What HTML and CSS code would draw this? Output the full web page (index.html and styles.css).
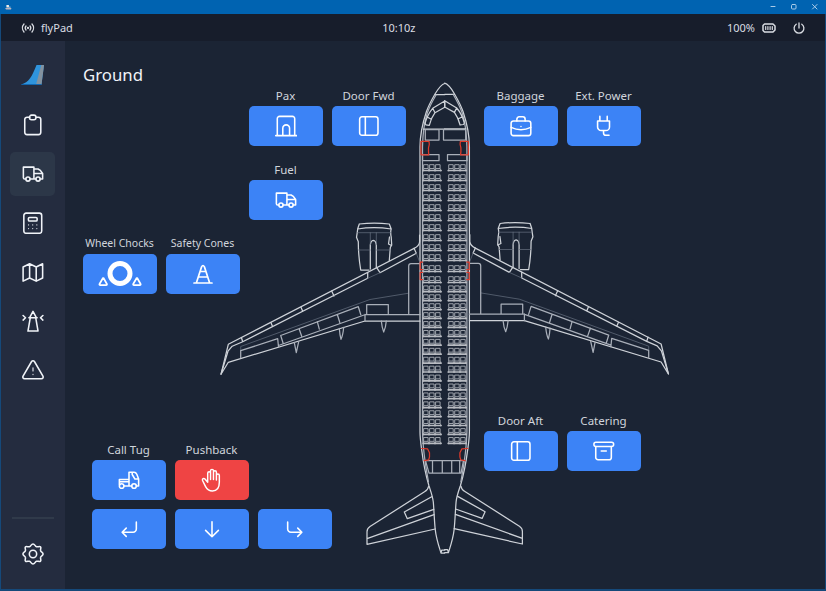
FILE: index.html
```html
<!DOCTYPE html>
<html lang="en">
<head>
<meta charset="utf-8">
<title>flyPad</title>
<link rel="stylesheet" href="styles.css">
</head>
<body>
<svg class="defs" aria-hidden="true">
  <symbol id="truck" viewBox="0 0 24 24"><circle cx="6.5" cy="17.5" r="2.3"/><circle cx="17.5" cy="17.5" r="2.3"/><path d="M4.2 17.5H3a1.5 1.5 0 0 1-1.5-1.500V4.500H13v13H8.800M13 17.500h2.200M19.800 17.500h2.700V11.500H13M13 6.500h4.500l2.500 1.500 2.500 3.500"/></symbol>
  <symbol id="door" viewBox="0 0 24 24"><rect x="1.800" y="2" width="20" height="20" rx="2.500"/><path d="M8 2v20"/></symbol>
</svg>
<div class="window">
  <div class="titlebar">
    <svg class="appicon" viewBox="0 0 8 6"><path d="M1.500 0h3v2h2v1h-5z" fill="#f2ece8"/><path d="M0 3.500h7.500L7 5.500H1z" fill="#b9b3bd"/></svg>
    <svg class="controls" viewBox="0 0 50 8"><path d="M1 3.500h4"/><rect x="21.500" y="1.500" width="4.500" height="4.500" rx="1"/><path d="m42.500 1.500 4.500 4.500m0-4.500-4.500 4.500"/></svg>
  </div>
  <header class="status">
    <div class="status-group">
      <svg class="signal" viewBox="0 0 14 10"><path d="M3 1a6 6 0 0 0 0 8M11 1a6 6 0 0 1 0 8M5 3a3.200 3.200 0 0 0 0 4M9 3a3.200 3.200 0 0 1 0 4"/><circle cx="7" cy="5" r=".5"/></svg>
      <span class="brand">flyPad</span>
    </div>
    <span class="clock">10:10z</span>
    <div class="status-group">
      <span class="percent">100%</span>
      <svg class="battery" viewBox="0 0 14 10"><path d="M2.500 1h8.500l2 2v4l-2 2H2.500L1 7.500v-5z"/><path class="cells" d="M3.700 3.500v3M5.900 3.500v3M8.100 3.500v3M10.300 3.500v3"/></svg>
      <svg class="power" viewBox="0 0 12 12"><path d="M6 1v5M3.200 2.200a4.900 4.900 0 1 0 5.600 0"/></svg>
    </div>
  </header>
  <div class="body">
    <nav class="sidebar">
      <div class="item"><svg class="tail" viewBox="0 0 24 22"><path d="M15.500 1H23l-2.500 19.500H0c8-2 11-8 15.500-19.500z" fill="#2f94dc"/><path d="M20.300 1H23l-2.500 19.500h-5.500z" fill="#83929f"/><path d="M1 20h19.500v1H0z" fill="#1166b0"/></svg></div>
      <div class="item"><svg class="icon" viewBox="0 0 24 24"><path d="M8.500 3.500H5.500A2.500 2.500 0 0 0 3 6v14A2.500 2.500 0 0 0 5.500 22.500h12.500a2.500 2.500 0 0 0 2.500-2.500V6A2.500 2.500 0 0 0 18 3.500h-2.500"/><rect x="8.200" y="1.200" width="7" height="5" rx="2.200"/></svg></div>
      <div class="item active"><svg class="icon"><use href="#truck"/></svg></div>
      <div class="item"><svg class="icon" viewBox="0 0 24 24"><rect x="2" y="1.200" width="19.500" height="22" rx="2.500"/><rect x="7" y="6" width="9.500" height="3.800" rx="1.200"/><path class="dots" d="M7.200 14v.1M11.700 14v.1M16.200 14v.1M7.200 18v.1M11.700 18v.1M16.200 18v.1"/></svg></div>
      <div class="item"><svg class="icon" viewBox="0 0 24 24"><path d="M1.200 6.500 8.300 3l7.200 3.500L22.500 3v15.500l-7 3.500-7.200-3.500-7.100 3.500zM8.300 3v15.500M15.500 6.500V22"/></svg></div>
      <div class="item"><svg class="icon" viewBox="0 0 24 24"><path d="m8.500 8 3.500-6.500L15.500 8M7.500 8.500h9M9 8.500 6.500 23h11L15 8.500M1.200 6l2.600 2.500L1.200 11M22.800 6l-2.600 2.500 2.600 2.500"/></svg></div>
      <div class="item"><svg class="icon" viewBox="0 0 24 24"><path d="M10.300 3 1.300 18.500c-.9 1.500-.2 3 1.600 3h18.200c1.800 0 2.500-1.500 1.600-3L13.700 3c-.9-1.400-2.500-1.400-3.400 0z"/><path class="dots" d="M12 9.500v3.500M12 16.800v.2"/></svg></div>
      <div class="settings">
        <svg class="icon" viewBox="0 0 24 24"><circle cx="12" cy="12" r="4"/><path d="M12 1c2 0 2.200 2.600 3.900 3.100 1.600.5 3.100-1.100 4.300.1s-.5 2.600.1 4.200c.5 1.600 2.700 1.800 2.700 3.600s-2.200 2-2.700 3.600c-.6 1.600 1.100 3-.1 4.200s-2.700-.4-4.300.1C14.200 20.400 14 23 12 23s-2.200-2.600-3.900-3.100c-1.600-.5-3.100 1.100-4.300-.1s.5-2.600-.1-4.200C3.200 14 1 13.800 1 12s2.200-2 2.700-3.600c.6-1.600-1.100-3 .1-4.200s2.700.4 4.300-.1C9.800 3.600 10 1 12 1z"/></svg>
      </div>
    </nav>
    <main class="ground">
      <h1>Ground</h1>

      <svg class="aircraft" viewBox="83 61 725 515">
        <defs>
          <g id="seat"><rect x=".9" y="-3.300" width="4.100" height="3.800"/><path d="M.5 1v2M5.500 1v2"/></g>
          <g id="trio"><use href="#seat"/><use href="#seat" x="6"/><use href="#seat" x="12"/><path class="back" d="M0 2.500h18"/></g>
          <g id="row"><use href="#trio" x="423.100"/><use href="#trio" x="448.200"/></g>
          <g id="fwd5"><use href="#row"/><use href="#row" y="10"/><use href="#row" y="20"/><use href="#row" y="30"/><use href="#row" y="40"/></g>
          <g id="aft3"><use href="#row"/><use href="#row" y="8.920"/><use href="#row" y="17.840"/></g>
          <g id="half">
            <path d="M444.700 83.500c-4 1-7 6-9.700 10.500-4 7-7 13-8.700 18-3 9-6.300 24-6.300 35v285c0 6 1 13 1.700 18 1.500 12 4 25 7.300 36 2 6 3.600 10 4.300 16 .8 9 1 19 2 28 1 9 3.500 16 5.700 23h3.700M435 94.700h9.700M441 552.700l.8-2.700h3"/>
            <path class="soft" d="M436 95c-4 7-7 13-8.700 18-3 9-4.500 21-4.800 34v285c.2 14 3 34 6 50"/>
            <path d="M444.700 101l-12 7.300c-3.500 4-6 9-7.700 15l1 1.500 3.300.5c1-4 3-9 5.700-12.600l9.700-5.400M432.700 108.300l2.300 4.400M427 117l4.500 2.300M444.700 101v6.300M423.500 129.200h21.200"/>
            <!-- wing -->
            <path d="M419.600 235v7q-.5 4-5.500 6.400L228.300 344.300l-7.300 30 7.300-12L365 321h55"/>
            <path d="M414 248.300l2.300 5-36.300 19.400-3.300-5M367.700 272.500v5.800L242.700 341.700l-1.300-4.200M242.700 341.700l-10.500 4.500-4.200 5-7 23M331.700 291l2.300 5M301 307.300l1.700 4M271 322.700l1.700 4"/>
            <path class="faint" d="M380 272.700l-12.300 5.600M416.300 253.300l3.500 9M408 293.300l-38 6.200L240.700 346.500v4"/>
            <path class="soft" d="M278.500 347l-.8-8.300-37 12v7M280.700 335.500l77.600-28.800 2.500 8M280.700 335.500l2.500 8M299 328.500l2.700 7.700M317.300 321.700l2 7.500M337.300 314.500l2.500 8M278.500 345.500l87-31H420M365 314.300v6.700M366.700 313.700v-9.200h21.600v9.200M408.700 313.700V266q0-2.300 2.300-2.300h8.700"/>
            <path class="soft" d="M294.300 342.700l2 10 2.400-11M339.300 328.300q.5 7 1.700 11 2-4 2.700-12M381.300 321q.7 7 2.400 11 2-4 2.600-11"/>
            <!-- stabilizer -->
            <path d="M428.500 486.500q-.5 3.500-4 5.300L370 526.500q-3 2-3 5.200v12.600L435.200 529M367 538.700l67-24M431.700 496.700L404.300 512l3 6.700 26.500-9.400"/>
          </g>
          <g id="engine">
            <path d="M359.300 224q15-1.700 30 0l1.900 5q-1 3 0 8l.5 8-1.400 2.500-1 13M359.300 224l-1.600 4.800-.5 4-.7 4.500 1.800 4.400q0 14 2.400 28.300h8.300M357.700 229q16-2.600 33.500 0"/>
            <path d="M370.300 269v-24q.5-4.500 3-4.700 2.500.2 3 4.700v22.500"/>
            <path d="M389.500 237l-1 7 3 1.500"/>
            <path class="faint" d="M357.700 232.700h33M358.500 250h11.800M376.300 250h14M370.300 232.700v12M376.300 232.700v12"/>
          </g>
          <g id="cabin">
            <path d="M421 141.300h8l.3 3-.8 3.500v4l.3 3h-7.800zM422.500 262h-2.300v7.500h2.300M422.500 272.300h-2.300v7.200h2.300M421.700 448.500l5.800.3 2 4v4l-.8 3-4.500.9"/>
          </g>
        </defs>
        <use href="#half"/>
        <use href="#half" transform="translate(889.400 -.3) scale(-1 1)"/>
        <use href="#engine"/>
        <use href="#engine" transform="translate(889.400 -.5) scale(-1 1)"/>
        <path class="soft" d="M425.300 129.500H439V140h-13.700zM443.500 129.500h22.200V140h-22.200zM422.500 154.500H439v6.200h-16.500zM447.500 154.500H467v6.200h-19.500zM425.500 460.700h38l-2.500 12.500h-32zM432.500 461v12M442.300 461v12M451.700 461v12M459.700 461v12"/>
        <g class="seats">
          <use href="#fwd5" y="168"/><use href="#fwd5" y="218"/>
          <use href="#row" y="269"/><use href="#row" y="280"/>
          <use href="#aft3" y="289.200"/><use href="#aft3" y="315.960"/><use href="#aft3" y="342.720"/>
          <use href="#aft3" y="369.480"/><use href="#aft3" y="396.240"/><use href="#aft3" y="423"/>
        </g>
        <g class="doors"><use href="#cabin"/><use href="#cabin" transform="translate(889.400 0) scale(-1 1)"/></g>
      </svg>

      <section class="group pax">
        <div class="service"><span>Pax</span><button><svg class="icon" viewBox="0 0 24 24"><path d="M2.500 22V4A2.500 2.500 0 0 1 5 1.500h14A2.500 2.500 0 0 1 21.500 4v18M.8 22.500h23M8.500 22v-7.500a3.700 3.700 0 0 1 7.400 0V22"/></svg></button></div>
        <div class="service"><span>Door Fwd</span><button><svg class="icon"><use href="#door"/></svg></button></div>
      </section>
      <section class="group fuel">
        <div class="service"><span>Fuel</span><button><svg class="icon"><use href="#truck"/></svg></button></div>
      </section>
      <section class="group hold">
        <div class="service"><span>Baggage</span><button><svg class="icon" viewBox="0 0 24 24"><rect x="1.200" y="6.500" width="21.500" height="16" rx="2.500"/><path d="M7.500 6.500v-2A2.500 2.500 0 0 1 10 2h4A2.500 2.500 0 0 1 16.500 4.500v2M1.200 13.500q10.700 5 21.500 0M12 12.500v.1"/></svg></button></div>
        <div class="service"><span>Ext. Power</span><button><svg class="icon" viewBox="0 0 24 24"><path d="M7.500 1.500v5M15.500 1.500v5M5 6.500h13v6.500a4 4 0 0 1-4 4H9a4 4 0 0 1-4-4zM11.500 17v2.500a2.500 2.500 0 0 0 2.500 2.500h3.500"/></svg></button></div>
      </section>
      <section class="group safety">
        <div class="service small"><span>Wheel Chocks</span><button><svg class="chocks" viewBox="0 0 44 26"><circle cx="22" cy="12.500" r="10" stroke-width="5"/><path d="m5 17-3.500 6q-.4 1.200.8 1.200h5.800q1.200 0 .8-1.200L5.500 17zM38.700 17l-3.500 6q-.4 1.200.8 1.200h5.800q1.200 0 .8-1.200l-3.400-6z"/></svg></button></div>
        <div class="service small"><span>Safety Cones</span><button><svg class="cone" viewBox="0 0 20 20"><path d="M1 19h18M3.500 18.500 8.600 2.800q1.400-2.600 2.800 0l5.100 15.700M7 7.500h6M5.500 13h9"/></svg></button></div>
      </section>
      <section class="group aft">
        <div class="service"><span>Door Aft</span><button><svg class="icon"><use href="#door"/></svg></button></div>
        <div class="service"><span>Catering</span><button><svg class="icon" viewBox="0 0 24 24"><rect x="1" y="2.500" width="21.500" height="4.500" rx="2.200"/><path d="M3 7v12A2.500 2.500 0 0 0 5.500 21.500h12A2.500 2.500 0 0 0 20 19V7M9 12h5.500"/></svg></button></div>
      </section>
      <section class="group tug">
        <div class="service"><span>Call Tug</span><button><svg class="icon" viewBox="0 0 24 24"><circle cx="4" cy="18.500" r="2.500"/><circle cx="17.500" cy="18.500" r="2.500"/><path d="M1.500 17V11.500h10.500V3.500h5.500q2 0 3 2.200l2 5.300v7.500H20M12 11.500v7M6.500 18.500H15M1.500 14H12M15.500 3.500v2.500l3 5h4"/></svg></button></div>
        <div class="service"><span>Pushback</span><button class="stop"><svg class="hand" viewBox="0 0 24 26"><path d="M7.300 15.500V5.600a1.550 1.550 0 0 1 3.100 0V12.500M10.400 5.600V3a1.600 1.600 0 0 1 3.200 0v9.500M13.600 4.500a1.600 1.600 0 0 1 3.200 0v8.500M16.800 8a1.600 1.600 0 0 1 3.200 0v7.500c0 6-3 9.500-7.500 9.500-3.500 0-5.800-1.500-7.500-4.800l-3.300-6.700c-.6-1.600 1.300-2.900 2.600-1.500l3 3.500"/></svg></button></div>
        <button class="row-start"><svg class="icon" viewBox="0 0 24 24"><path d="M20 4.500v7.500a3.500 3.500 0 0 1-3.500 3.500H4.500M9 11l-4.500 4.500L9 20"/></svg></button>
        <button><svg class="icon" viewBox="0 0 24 24"><path d="M12 4v16.500M5 13.500l7 7 7-7"/></svg></button>
        <button><svg class="icon" viewBox="0 0 24 24"><path d="M4 4.500v7.500a3.500 3.500 0 0 0 3.500 3.500h12M15 11l4.500 4.500L15 20"/></svg></button>
      </section>
    </main>
  </div>
</div>
</body>
</html>
```
FILE: styles.css
```css
* { box-sizing: border-box; }

body {
  margin: 0;
  font-family: "Noto Sans", "Open Sans", sans-serif;
  color: #f0f3f8;
  background: #1b2434;
}

svg {
  display: block;
  fill: none;
  stroke: currentColor;
  stroke-width: 1.7;
  stroke-linecap: round;
  stroke-linejoin: round;
}

.defs { display: none; }

.window {
  width: 826px;
  height: 591px;
  display: flex;
  flex-direction: column;
  border: solid #15497a;
  border-width: 0 1px 2px;
}

.titlebar {
  flex: 0 0 14px;
  margin: 0 -1px;
  padding: 0 6px 0 5px;
  display: flex;
  align-items: center;
  justify-content: space-between;
  background: #0063b1;
}
.appicon { width: 7px; height: 5px; stroke: none; }
.controls { width: 50px; height: 8px; stroke-width: 1; color: #a9cbe8; }

.status {
  flex: 0 0 27px;
  padding: 0 20px;
  display: flex;
  align-items: center;
  justify-content: space-between;
  background: #171d2b;
  color: #dadde3;
  font-size: 11px;
  line-height: 16px;
}
.status-group { display: flex; align-items: center; }
.signal { width: 14px; height: 10px; margin-right: 6px; stroke-width: 1.300; }
.clock { margin-right: 2px; }
.battery { width: 14px; height: 10px; margin: 0 17px 0 7px; stroke-width: 1.500; }
.cells { stroke-width: 1.200; }
.power { width: 12px; height: 12px; stroke-width: 1.300; }

.body { flex: 1; display: flex; min-height: 0; }

.sidebar {
  flex: 0 0 64px;
  padding: 12px 9px 0;
  display: flex;
  flex-direction: column;
  gap: 5px;
  background: #242c3f;
}
.item {
  width: 45px;
  height: 44px;
  display: grid;
  place-items: center;
  border-radius: 5px;
}
.item:nth-child(2) { margin-top: 1px; }
.active { background: #2c3748; }
.tail { width: 24px; height: 22px; stroke: none; }
.icon { width: 22px; height: 22px; }
.dots { stroke-width: 1.200; }
.settings {
  margin: auto 2px 0;
  height: 72px;
  padding-top: 24px;
  border-top: 2px solid #303a4a;
  display: flex;
  justify-content: center;
}

.ground {
  flex: 1;
  padding: 20px 0 0 18px;
  display: grid;
  grid-template-columns: 166px 166px 69px 1fr;
  grid-template-rows: 26px 74px 74px 177px 29px 1fr;
}
h1 {
  grid-area: 1 / 1;
  margin: 0;
  font-size: 16.800px;
  line-height: 28px;
  font-weight: 400;
}
.aircraft {
  grid-area: 1 / 1 / -1 / -1;
  width: 725px;
  height: 515px;
  color: #ced2d8;
  stroke-width: 1.250;
}
.soft { stroke: #a9afb9; }
.faint { stroke: #677181; stroke-width: .7; }
.seats { stroke: #b4b8bf; stroke-width: .85; }
.back { stroke: #b9bcc2; stroke-width: 1.700; }
.doors { stroke: #df3a2b; }

.group {
  z-index: 1;
  display: grid;
  grid-template-columns: repeat(3, 74px);
  gap: 9px;
  align-content: start;
  justify-self: start;
}
.pax { grid-area: 2 / 2; }
.fuel { grid-area: 3 / 2; }
.safety { grid-area: 4 / 1; }
.hold { grid-area: 2 / 4; }
.aft { grid-area: 5 / 4; }
.tug { grid-area: 6 / 1 / 7 / 3; margin-left: 9px; }

.service span {
  display: block;
  height: 19px;
  padding-right: 1px;
  line-height: 17px;
  font-size: 11.500px;
  text-align: center;
  white-space: nowrap;
  color: #d1d5dc;
}
.small span { font-size: 10.500px; }
.row-start { grid-column: 1; }

button {
  width: 74px;
  height: 40px;
  padding: 0 1px 0 0;
  border: 0;
  border-radius: 5px;
  display: grid;
  place-items: center;
  color: #fff;
  background: #3c83f6;
}
.stop { background: #ef4444; }
.chocks { width: 44px; height: 26px; }
.cone { width: 20px; height: 20px; }
.hand { width: 22px; height: 24px; stroke-width: 1.600; }
```
